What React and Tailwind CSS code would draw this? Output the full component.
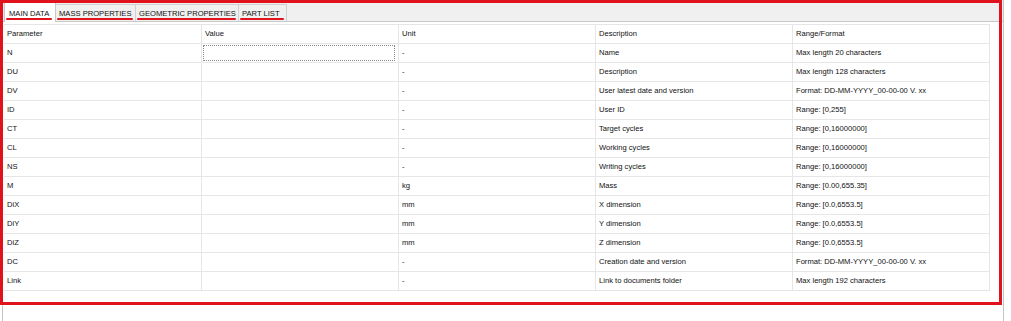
import React from "react";

const rows = [
  ["N", "", "-", "Name", "Max length 20 characters"],
  ["DU", "", "-", "Description", "Max length 128 characters"],
  ["DV", "", "-", "User latest date and version", "Format: DD-MM-YYYY_00-00-00 V. xx"],
  ["ID", "", "-", "User ID", "Range: [0,255]"],
  ["CT", "", "-", "Target cycles", "Range: [0,16000000]"],
  ["CL", "", "-", "Working cycles", "Range: [0,16000000]"],
  ["NS", "", "-", "Writing cycles", "Range: [0,16000000]"],
  ["M", "", "kg", "Mass", "Range: [0.00,655.35]"],
  ["DiX", "", "mm", "X dimension", "Range: [0.0,6553.5]"],
  ["DiY", "", "mm", "Y dimension", "Range: [0.0,6553.5]"],
  ["DiZ", "", "mm", "Z dimension", "Range: [0.0,6553.5]"],
  ["DC", "", "-", "Creation date and version", "Format: DD-MM-YYYY_00-00-00 V. xx"],
  ["Link", "", "-", "Link to documents folder", "Max length 192 characters"],
];

const tabs = [
  { label: "MAIN DATA", w: "w-[52px]", active: true },
  { label: "MASS PROPERTIES", w: "w-[80px]" },
  { label: "GEOMETRIC PROPERTIES", w: "w-[103px]" },
  { label: "PART LIST", w: "w-[48px]" },
];

function Cell({ children, last }) {
  return (
    <div
      className={
        "h-[19px] flex items-center pl-[3px] border-b border-[#e6e6e6] overflow-hidden whitespace-nowrap " +
        (last ? "" : "border-r")
      }
    >
      {children}
    </div>
  );
}

export default function App() {
  return (
    <div className="relative w-[1011px] h-[321px] bg-white overflow-hidden font-['Liberation_Sans',Arial,sans-serif] text-[7.6px] text-[#111]">
      <div className="ml-[2px] w-[1002px] h-full border-x border-[#c4c4c4] flex flex-col">
        {/* Tab bar */}
        <div className="h-[22px] shrink-0 bg-[#f0f0f0] border-b border-[#c8c8c8] flex items-end pl-[1px]">
          {tabs.map((t) =>
            t.active ? (
              <div
                key={t.label}
                className={`relative ${t.w} h-[20px] -mb-px bg-white border-x border-t border-[#c8c8c8] flex items-start pt-[5px] pl-[4px] whitespace-nowrap`}
              >
                <span>{t.label}</span>
                <span className="absolute left-[1px] bottom-[2px] w-[46px] h-[2px] rounded-full bg-[#e0121b]" />
              </div>
            ) : (
              <div
                key={t.label}
                className={`relative ${t.w} h-[17px] bg-[#f0f0f0] border-r border-t border-[#d0d0d0] flex items-start pt-[3px] pl-[3px] whitespace-nowrap`}
              >
                <span>{t.label}</span>
                <span className="absolute left-[1px] right-[2px] bottom-[1px] h-[2px] rounded-full bg-[#e0121b]" />
              </div>
            )
          )}
        </div>
        {/* Pane */}
        <div className="flex-1 bg-white pl-[1px] pt-[2px]">
          <div className="w-[986px] grid grid-cols-[198px_197px_197px_197px_197px] border-t border-[#dcdcdc] border-r border-[#e6e6e6]">
            <Cell>Parameter</Cell>
            <Cell>Value</Cell>
            <Cell>Unit</Cell>
            <Cell>Description</Cell>
            <Cell last>Range/Format</Cell>
            {rows.map((r, i) => (
              <React.Fragment key={r[0]}>
                <Cell>{r[0]}</Cell>
                {i === 0 ? (
                  <div className="h-[19px] flex items-center pl-[1px] pr-[3px] border-b border-r border-[#e6e6e6]">
                    <div className="w-full h-[16px] border border-dotted border-[#8a8a8a] bg-white" />
                  </div>
                ) : (
                  <Cell>{r[1]}</Cell>
                )}
                <Cell>{r[2]}</Cell>
                <Cell>{r[3]}</Cell>
                <Cell last>{r[4]}</Cell>
              </React.Fragment>
            ))}
          </div>
        </div>
      </div>
      {/* Annotation frame */}
      <div className="absolute left-0 top-0 w-[1002px] h-[305px] border-[3px] border-[#e0121b] pointer-events-none" />
    </div>
  );
}
